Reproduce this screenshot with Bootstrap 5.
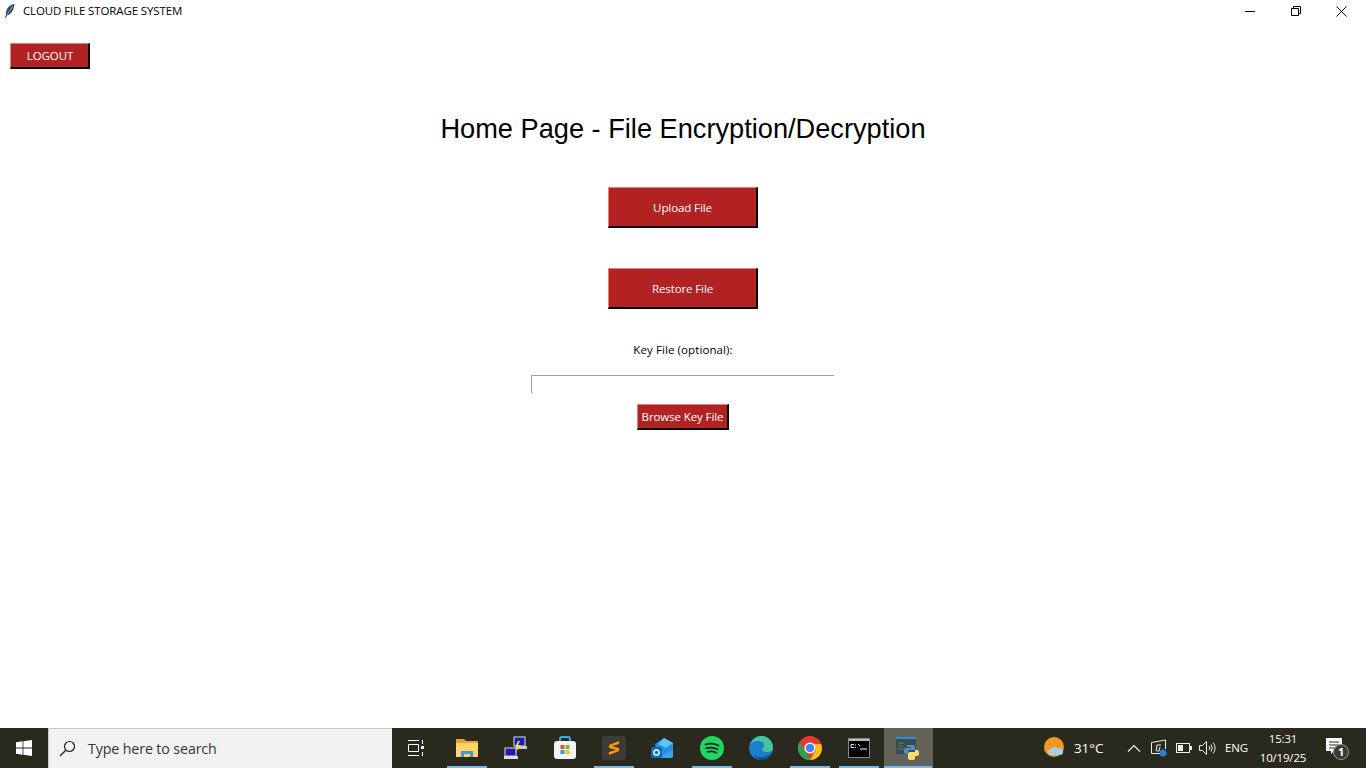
<!DOCTYPE html>
<html lang="en">
<head>
  <meta charset="UTF-8">
  <title>CLOUD FILE STORAGE SYSTEM</title>
  <link href="https://cdn.jsdelivr.net/npm/bootstrap@5.3.0/dist/css/bootstrap.min.css" rel="stylesheet">
  <style>
    html, body { height: 768px; overflow: hidden; }
    body { font-family: "Open Sans", "Noto Sans", sans-serif; font-size: 12px; color: #000; background: #fff; }
    .app-window { height: 728px; }
    .title-bar { height: 22px; }
    .title-icon { margin: 0 7px 0 4px; }
    .title-text { font-size: 11.5px; letter-spacing: -0.12px; }
    .win-controls { margin-right: 2px; }
    .win-btn { width: 46px; height: 20px; }
    .win-btn + .win-btn { margin-left: -.5px; }
    .tk-btn { background: #b22222; color: #fff; border-style: solid; border-color: #e77f7f #000 #000 #e77f7f; border-width: 1px 2px 2px 1px; border-radius: 0; padding: 1px 0 0; font-size: 11.5px; letter-spacing: -0.1px; }
    .btn-logout { width: 80px; height: 26px; margin: 21px 0 0 10px; padding: 0 0 0 1px; }
    .btn-main { width: 150px; height: 41px; }
    .btn-restore { margin-top: 40px; }
    .btn-browse { width: 92px; height: 26px; margin-top: 11px; padding: 0; }
    .page-heading { font-family: "Liberation Sans", Arial, sans-serif; font-size: 27.2px; font-weight: 400; line-height: 32px; margin: 44px 0 42px; }
    .key-label { line-height: 16px; font-size: 11.5px; letter-spacing: 0.1px; margin-top: 33px; }
    .key-input { width: 303px; height: 18px; margin: 17px 1px 0 0; border: 0; border-top: 1px solid #a0a0a0; border-left: 1px solid #a0a0a0; border-radius: 0; outline: 0; padding: 0 2px; background: #fff; }
    .task-bar { height: 40px; background: #2a291e; color: #fff; }
    .start-btn { width: 48px; }
    .search-box { width: 344px; background: #f2f2f2; border: 1px solid #c8c8c8; border-bottom: 0; border-right: 0; color: #333; font-size: 14.2px; letter-spacing: -0.1px; padding-left: 10px; gap: 12px; }
    .task-item { width: 49px; height: 40px; padding-right: 2px; }
    .task-view { width: 51px; padding-right: 3px; }
    .task-item.is-open::after { content: ""; position: absolute; left: 4px; right: 5px; bottom: 0; height: 2px; background: #76b9ed; }
    .task-item.is-active { background: #63635a; }
    .task-item.is-active::after { left: 0; right: 1px; }
    .tray-zone { margin-right: 17px; }
    .weather-icon { margin-right: 8px; }
    .weather-temp { font-size: 13.5px; letter-spacing: -0.1px; width: 38px; }
    .tray-chevron { margin-left: 15px; }
    .tray-net { margin-left: 9px; }
    .tray-battery { margin-left: 8px; }
    .tray-sound { margin-left: 7px; }
    .lang-text { font-size: 11.5px; letter-spacing: -0.2px; margin-left: 9px; width: 24px; }
    .clock-text { font-size: 11.5px; line-height: 19px; letter-spacing: -0.2px; width: 58px; margin-left: 5px; }
    .notify-box { width: 24px; height: 24px; margin-left: 13px; }
    .notify-count { left: 13px; top: 9px; font-size: 11px; line-height: 14px; }
  </style>
</head>
<body>

  <!-- App window -->
  <div class="app-window d-flex flex-column">
    <div class="title-bar d-flex align-items-center">
      <svg class="title-icon" width="12" height="16" viewBox="0 0 12 16">
        <path d="M10.500 1 C6 1.500 2.500 5 2 10 L1.800 12.500 L1 15 L2 15 L3 12.500 C7 11.500 10 7 10.500 1Z" fill="#2f4a66"/>
        <path d="M9 3 L3 12" stroke="#b9cde0" stroke-width=".7"/>
      </svg>
      <span class="title-text">CLOUD FILE STORAGE SYSTEM</span>
      <div class="win-controls ms-auto d-flex">
        <div class="win-btn d-flex align-items-center justify-content-center">
          <svg width="10" height="10"><path d="M0 5.500H10" stroke="#000"/></svg>
        </div>
        <div class="win-btn d-flex align-items-center justify-content-center">
          <svg width="10" height="10"><path d="M.5 2.500h7v7h-7zM2.500 2.500v-2h7v7h-2" fill="none" stroke="#000"/></svg>
        </div>
        <div class="win-btn d-flex align-items-center justify-content-center">
          <svg width="11" height="11"><path d="M.5.5l10 10M10.500.5l-10 10" stroke="#000"/></svg>
        </div>
      </div>
    </div>

    <div><button class="tk-btn btn-logout">LOGOUT</button></div>

    <div class="d-flex flex-column align-items-center">
      <h1 class="page-heading">Home Page - File Encryption/Decryption</h1>
      <button class="tk-btn btn-main">Upload File</button>
      <button class="tk-btn btn-main btn-restore">Restore File</button>
      <label class="key-label">Key File (optional):</label>
      <input class="key-input" type="text">
      <button class="tk-btn btn-browse">Browse Key File</button>
    </div>
  </div>

  <!-- Windows taskbar -->
  <div class="task-bar d-flex align-items-stretch">
    <div class="start-btn d-flex align-items-center justify-content-center">
      <svg width="16" height="16" viewBox="0 0 16 16"><path d="M0 2.200l6.600-.9v6.300H0zM7.400 1.200L16 0v7.600H7.400zM0 8.400h6.600v6.300L0 13.800zM7.400 8.400H16V16l-8.600-1.200z" fill="#fff"/></svg>
    </div>
    <div class="search-box d-flex align-items-center">
      <svg width="17" height="17" viewBox="0 0 17 17"><circle cx="10.500" cy="6.500" r="5" fill="none" stroke="#222" stroke-width="1.200"/><path d="M6.800 10.200L1 16" stroke="#222" stroke-width="1.300"/></svg>
      <span>Type here to search</span>
    </div>

    <div class="task-item task-view position-relative d-flex align-items-center justify-content-center">
      <svg width="16" height="16" viewBox="0 0 16 16" fill="none" stroke="#fff"><path d="M0 .5h11M0 15.500h11M.5 4.500h10v7H.5z"/><path d="M14.500 0v4M14.500 12v4"/><rect x="13" y="6" width="3" height="3" fill="#fff" stroke="none"/></svg>
    </div>
    <div class="task-item is-open position-relative d-flex align-items-center justify-content-center">
      <svg width="22" height="20" viewBox="0 0 22 20"><path d="M0 1h8l2 2h12v16H0z" fill="#e5a82e"/><path d="M0 5h22v14H0z" fill="#fbd568"/><path d="M5 19v-6h12v6h-3v-3H8v3z" fill="#3c9ad9"/></svg>
    </div>
    <div class="task-item position-relative d-flex align-items-center justify-content-center">
      <svg width="24" height="24" viewBox="0 0 24 24"><rect x="10" y="1" width="11" height="9" fill="#1b1bb5" stroke="#ddd"/><rect x="12" y="10" width="11" height="3" fill="#ccc"/><rect x="1" y="12" width="11" height="8" fill="#1b1bb5" stroke="#ddd"/><rect x="0" y="20" width="14" height="3" fill="#ddd"/><path d="M14 5l-3 6h3l-3 6 6-8h-3l2-4z" fill="#f3e23a"/></svg>
    </div>
    <div class="task-item position-relative d-flex align-items-center justify-content-center">
      <svg width="24" height="24" viewBox="0 0 24 24"><path d="M7 6V3a2 2 0 012-2h6a2 2 0 012 2v3" fill="none" stroke="#39a9e0" stroke-width="2"/><rect x="1" y="5" width="22" height="18" rx="3" fill="#f4f4f4"/><rect x="7.500" y="9" width="4" height="4" fill="#e8502a"/><rect x="12.500" y="9" width="4" height="4" fill="#7ab929"/><rect x="7.500" y="14" width="4" height="4" fill="#1ea1e8"/><rect x="12.500" y="14" width="4" height="4" fill="#fbb90f"/></svg>
    </div>
    <div class="task-item is-open position-relative d-flex align-items-center justify-content-center">
      <svg width="24" height="24" viewBox="0 0 24 24"><rect width="24" height="24" rx="2" fill="#3c3b37"/><path d="M17 5L7 9v3l7 2-7 2v3l10-4v-3l-7-2 7-2z" fill="#ff9800"/></svg>
    </div>
    <div class="task-item position-relative d-flex align-items-center justify-content-center">
      <svg width="24" height="24" viewBox="0 0 24 24"><path d="M4 8l9-6 9 5v13a2 2 0 01-2 2H7z" fill="#2a8fe0"/><path d="M13 2l9 5-7 5-8-4z" fill="#5cc4f2"/><path d="M8 22l14-8v6a2 2 0 01-2 2z" fill="#38a6e8"/><rect x="0" y="11" width="11" height="11" rx="2" fill="#0f6cbd"/><circle cx="5.500" cy="16.500" r="2.600" fill="none" stroke="#fff" stroke-width="1.500"/></svg>
    </div>
    <div class="task-item is-open position-relative d-flex align-items-center justify-content-center">
      <svg width="24" height="24" viewBox="0 0 24 24"><circle cx="12" cy="12" r="12" fill="#1ed760"/><path d="M5.500 8.500c4.500-1.300 9-1 13 1M6.500 12.200c3.800-1 7.500-.8 11 1M7.500 15.800c3-.8 6-.6 9 .9" fill="none" stroke="#15202a" stroke-width="1.800" stroke-linecap="round"/></svg>
    </div>
    <div class="task-item position-relative d-flex align-items-center justify-content-center">
      <svg width="24" height="24" viewBox="0 0 24 24"><circle cx="12" cy="12" r="12" fill="#1a7fc9"/><path d="M1 10C3 3 8 0 12 0c7 0 12 5 12 12 0 3-3 4-6 4s-5-1-5-3c0-1 2-1 2-4 0-3-3-4-6-4-4 0-7 2-8 5z" fill="#43c59b"/><path d="M23 15c-2 6-7 9-11 9-3 0-6-2-7-5 3 3 9 3 13 1 2-1 4-3 5-5z" fill="#0f4f96"/></svg>
    </div>
    <div class="task-item is-open position-relative d-flex align-items-center justify-content-center">
      <svg width="24" height="24" viewBox="0 0 24 24"><circle cx="12" cy="12" r="12" fill="#e33b2e"/><path d="M12 24A12 12 0 011.600 6l6 10.500 5.500 7.400z" fill="#2ba24c"/><path d="M24 12a12 12 0 01-12 12l6-10.500-2-5.500h7a12 12 0 011 4z" fill="#fbc116"/><circle cx="12" cy="12" r="5.600" fill="#fff"/><circle cx="12" cy="12" r="4.300" fill="#4285f4"/></svg>
    </div>
    <div class="task-item is-open position-relative d-flex align-items-center justify-content-center">
      <svg width="22" height="20" viewBox="0 0 22 20"><rect x=".5" y=".5" width="21" height="19" fill="#000" stroke="#888"/><rect x="1" y="1" width="20" height="2" fill="#bbb"/><path d="M3 6.500H6M3 9.500H6M3 6.500V9.500M7.500 6.500V7.500M7.500 9V10M10 6L12 8" stroke="#ddd" fill="none"/><path d="M12 11H19" stroke="#ddd" stroke-width="1.200"/></svg>
    </div>
    <div class="task-item is-open is-active position-relative d-flex align-items-center justify-content-center">
      <svg width="24" height="24" viewBox="0 0 24 24"><rect x="0" y="1" width="20" height="17" fill="#3d4a52"/><rect x="0" y="1" width="20" height="2" fill="#2a8fd6"/><path d="M2 7h6M2 10h5M2 13h6" stroke="#4a8f4d"/><path d="M12 9h5a2 2 0 012 2v3h-5a2 2 0 00-2 2v2h-2a2 2 0 01-2-2v-2a2 2 0 012-2h5v-1h-4V9z" fill="#4d8fc4"/><path d="M19 14h2a2 2 0 012 2v2a2 2 0 01-2 2h-2v2a2 2 0 01-2 2h-3a2 2 0 01-2-2v-4a2 2 0 012-2h5z" fill="#fbdc6a"/></svg>
    </div>

    <div class="tray-zone ms-auto d-flex align-items-center">
      <svg class="weather-icon" width="22" height="22" viewBox="0 0 22 22"><circle cx="10" cy="10" r="10" fill="#f39a1e"/><path d="M7 18a3 3 0 010-6c1-3 6-3 7 0a3 3 0 015 3 3 3 0 01-3 3z" fill="#a9cdea"/></svg>
      <span class="weather-temp">31°C</span>
      <svg class="tray-chevron" width="14" height="8" viewBox="0 0 14 8"><path d="M1 7.500l6-6 6 6" fill="none" stroke="#eee" stroke-width="1.200"/></svg>
      <svg class="tray-net" width="18" height="18" viewBox="0 0 18 18"><path d="M1.500 3.500l14-2.500v1M1.500 3.500v11h10" fill="none" stroke="#eee"/><path d="M15.500 2v8" stroke="#eee"/><path d="M6 12l1-6h4M10 8l-1 4H7" fill="none" stroke="#eee"/><circle cx="13" cy="14" r="3.500" fill="#2f7fd1"/></svg>
      <svg class="tray-battery" width="16" height="10" viewBox="0 0 16 10"><rect x=".5" y=".5" width="13" height="9" fill="none" stroke="#eee"/><rect x="2" y="2" width="5" height="6" fill="#eee"/><rect x="14" y="3" width="2" height="4" fill="#eee"/></svg>
      <svg class="tray-sound" width="17" height="14" viewBox="0 0 17 14" fill="none" stroke="#eee"><path d="M.5 4.500h3l4-4v13l-4-4h-3z"/><path d="M10 5a3 3 0 010 4M12 3.500a6 6 0 010 7M14 1.500a9 9 0 010 11"/></svg>
      <span class="lang-text">ENG</span>
      <div class="clock-text text-center"><div>15:31</div><div>10/19/25</div></div>
      <div class="notify-box position-relative">
        <svg width="24" height="24" viewBox="0 0 24 24"><path d="M1 2h16v13H9l-3 3v-3H1z" fill="#fff"/><path d="M4 6h10M4 9h10M4 12h6" stroke="#2a291e"/><circle cx="16" cy="16" r="7.500" fill="#3a3a36" stroke="#999"/></svg>
        <span class="notify-count position-absolute fw-bold">1</span>
      </div>
    </div>
  </div>

  <script src="https://cdn.jsdelivr.net/npm/bootstrap@5.3.0/dist/js/bootstrap.bundle.min.js"></script>
</body>
</html>
